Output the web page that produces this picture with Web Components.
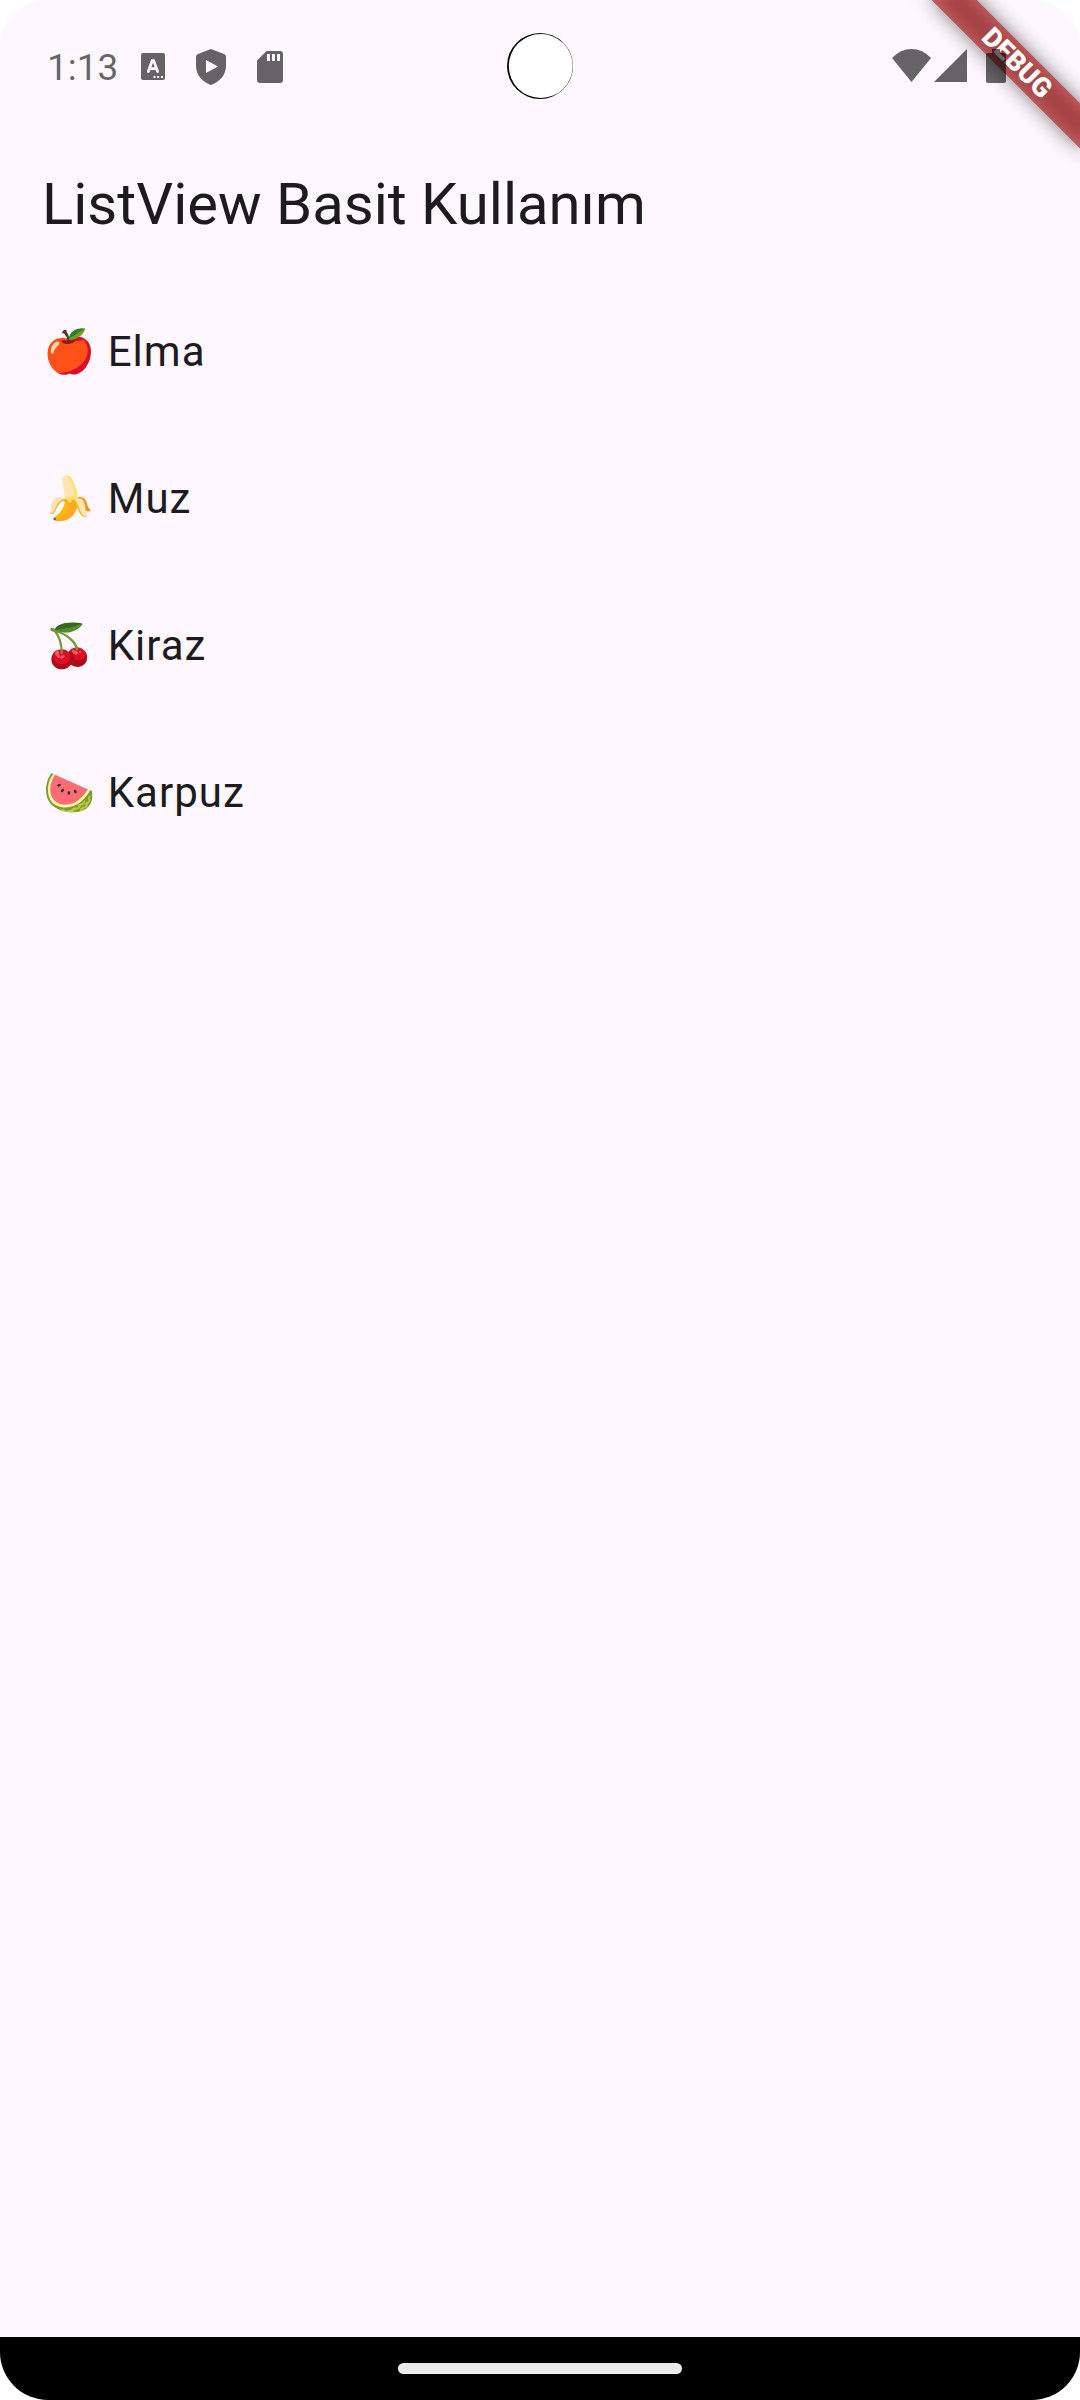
<!DOCTYPE html>
<html lang="tr">
<head>
<meta charset="utf-8">
<meta name="viewport" content="width=device-width, initial-scale=1">
<title>ListView Basit Kullanım</title>
<style>
  html, body { margin: 0; background: #fff; }
  body { font-family: Roboto, "Noto Color Emoji", sans-serif; color: #1d1b20; }
</style>
</head>
<body>
<phone-screen>
  <status-bar slot="status" time="1:13"></status-bar>
  <debug-ribbon slot="ribbon">DEBUG</debug-ribbon>
  <app-bar slot="header">ListView Basit Kullanım</app-bar>
  <list-view>
    <list-tile>🍎 Elma</list-tile>
    <list-tile>🍌 Muz</list-tile>
    <list-tile>🍒 Kiraz</list-tile>
    <list-tile>🍉 Karpuz</list-tile>
  </list-view>
  <gesture-bar slot="navigation"></gesture-bar>
</phone-screen>
<script>
const define = (name, html, setup) => customElements.define(name, class extends HTMLElement {
  constructor() {
    super();
    this.attachShadow({ mode: "open" }).innerHTML = html;
  }
  connectedCallback() { if (setup) setup(this); }
});

define("phone-screen", `
<style>
  :host { display: flex; flex-direction: column; position: relative; min-height: 100vh; border-radius: 48px; overflow: hidden; background: #fef7ff; }
  main { flex: 1; }
</style>
<slot name="status"></slot>
<slot name="ribbon"></slot>
<slot name="header"></slot>
<main><slot></slot></main>
<slot name="navigation"></slot>`);

define("status-bar", `
<style>
  :host { display: grid; grid-template-columns: 1fr auto 1fr; align-items: center; height: 131px; position: relative; z-index: 2; color: rgba(0, 0, 0, .6); }
  svg { display: block; fill: currentColor; }
  .left, .right { display: flex; align-items: center; }
  .left { padding: 2px 0 0 47px; }
  time { padding-top: 2px; font-size: 37px; line-height: 44px; margin-right: 23px; }
  .notes { display: flex; align-items: center; gap: 31px; }
  .right { justify-content: flex-end; padding-right: 74px; gap: 3px; }
  .battery { margin-left: 16px; }
</style>
<div class="left">
  <time></time>
  <div class="notes">
    <svg width="24" height="27" viewBox="0 0 24 27"><path fill-rule="evenodd" d="M2 0H22Q24 0 24 2V25Q24 27 22 27H2Q0 27 0 25V2Q0 0 2 0ZM10.300 6L6 18Q5.700 20 7.400 20Q8.500 20 8.900 18.600L9.500 17H14.500L15.100 18.600Q15.600 20 16.700 20Q18.400 20 18 18L13.700 6.700Q13.200 6 12 6ZM12 9.400L13.600 14.300H10.400ZM12.500 23h2v2h-2zM16.200 23h2v2h-2zM20 23h2v2h-2z"/></svg>
    <svg width="30" height="36" viewBox="0 0 30 36"><path fill-rule="evenodd" d="M15 0L28 5Q30 5.700 30 8V17C30 26 23.500 33 15 36C6.500 33 0 26 0 17V8Q0 5.700 2 5ZM10 11V24L22 17.500Z"/></svg>
    <svg width="26" height="32" viewBox="0 0 26 32"><path fill-rule="evenodd" d="M9.500 0H23Q26 0 26 3V29Q26 32 23 32H3Q0 32 0 29V9.500ZM10 3V10H13V3ZM15 3V10H18V3ZM20 3V10H23V3Z"/></svg>
  </div>
</div>
<svg class="camera" width="66" height="66" viewBox="0 0 66 66"><circle cx="33" cy="33" r="33" fill="#000"/><circle cx="33.800" cy="33" r="32" fill="#fff"/></svg>
<div class="right">
  <svg width="39" height="33" viewBox="0 0 39 33"><path d="M0 9Q8.500 0 19.500 0Q30.500 0 39 9L19.500 33Z"/></svg>
  <svg width="33" height="33" viewBox="0 0 33 33"><path d="M33 0V33H0Z"/></svg>
  <svg class="battery" width="20" height="34" viewBox="0 0 20 34"><path d="M6 0H14V4H18Q20 4 20 6V32Q20 34 18 34H2Q0 34 0 32V6Q0 4 2 4H6Z"/></svg>
</div>`, el => { el.shadowRoot.querySelector("time").textContent = el.getAttribute("time"); });

define("debug-ribbon", `
<style>
  :host { position: absolute; top: 0; left: 100%; z-index: 1; transform: rotate(45deg); transform-origin: 0 0; }
  .shade, .band { position: absolute; left: -105px; top: 73px; width: 210px; height: 32px; }
  .shade { background: rgba(0, 0, 0, .5); filter: blur(10px); }
  .band { background: rgba(183, 28, 28, .63); color: #fff; font-size: 27px; font-weight: 900; line-height: 32px; text-align: center; }
</style>
<div class="shade"></div>
<div class="band"><slot></slot></div>`);

define("app-bar", `
<style>
  :host { display: flex; align-items: center; height: 147px; padding: 0 42px; }
  h1 { margin: 0; padding-bottom: 2px; font-size: 58px; font-weight: 400; line-height: 74px; }
</style>
<h1><slot></slot></h1>`);

define("list-view", `
<style>
  :host { display: block; }
</style>
<div role="list"><slot></slot></div>`);

define("list-tile", `
<style>
  :host { display: flex; align-items: center; height: 147px; padding: 0 43px; font-size: 42px; line-height: 64px; letter-spacing: 1px; }
</style>
<span><slot></slot></span>`, el => el.setAttribute("role", "listitem"));

define("gesture-bar", `
<style>
  :host { display: flex; align-items: center; justify-content: center; height: 63px; background: #000; }
  div { width: 284px; height: 11px; border-radius: 6px; background: #ebebeb; }
</style>
<div></div>`);
</script>
</body>
</html>
